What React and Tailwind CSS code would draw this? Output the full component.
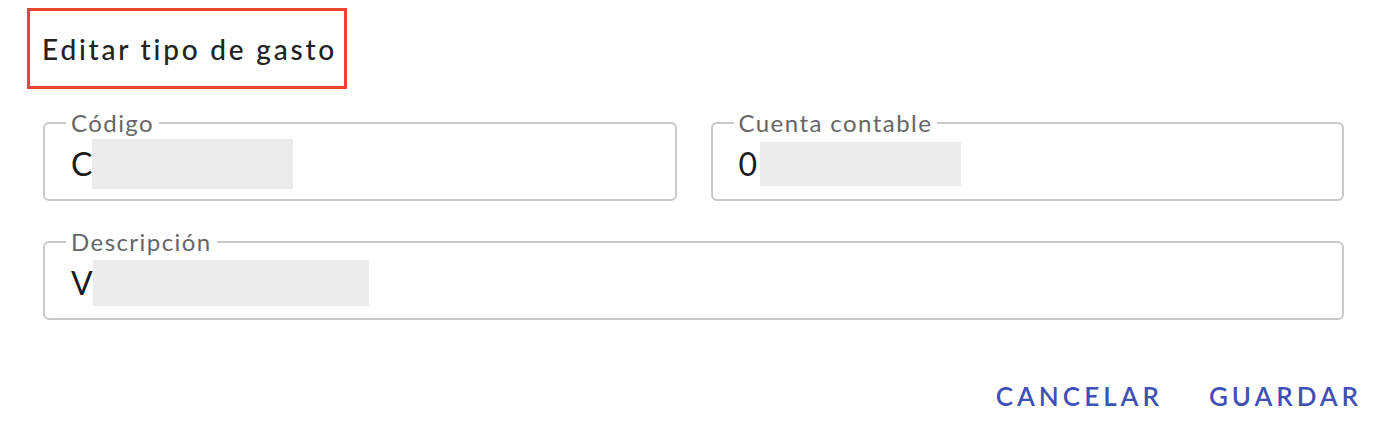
export default function App() {
  const font = { fontFamily: 'Lato, "Noto Sans", sans-serif' };
  return (
    <div className="w-full h-[442px] bg-white" style={font}>
      {/* Header */}
      <div className="pl-[27px] pt-[8px]">
        <div className="w-[320px] h-[81px] border-[3px] border-[#e8452a] flex items-center pl-[12px]">
          <h1 className="text-[28px] font-medium text-[#222] tracking-[0.1em] leading-none whitespace-nowrap">Editar tipo de gasto</h1>
        </div>
      </div>

      {/* Fields */}
      <div className="pl-[43px] pr-[42px] mt-[21px] flex flex-col gap-[28px]">
        <div className="grid grid-cols-2 gap-[34px]">
          <fieldset className="border-2 border-[#c8c8c8] rounded-[6px] px-[26px] pb-[10px] m-0 min-w-0">
            <legend className="text-[24px] leading-[26px] tracking-[0.06em] text-[#666] px-[5px] -ml-[5px]">Código</legend>
            <div className="mt-[3px] h-[50px] flex items-center text-[32px] text-[#1c1c1c]">
              <span>C</span>
              <span className="w-[201px] h-[50px] bg-[#ebebeb]" />
            </div>
          </fieldset>
          <fieldset className="border-2 border-[#c8c8c8] rounded-[6px] px-[26px] pb-[10px] m-0 min-w-0">
            <legend className="text-[24px] leading-[26px] tracking-[0.06em] text-[#666] px-[5px] -ml-[5px]">Cuenta contable</legend>
            <div className="mt-[3px] h-[50px] flex items-center text-[32px] text-[#1c1c1c]">
              <span className="pr-[3px]">0</span>
              <span className="w-[201px] h-[44px] bg-[#ebebeb]" />
            </div>
          </fieldset>
        </div>
        <fieldset className="border-2 border-[#c8c8c8] rounded-[6px] px-[26px] pb-[10px] m-0 min-w-0">
          <legend className="text-[24px] leading-[26px] tracking-[0.06em] text-[#666] px-[5px] -ml-[5px]">Descripción</legend>
          <div className="mt-[3px] h-[50px] flex items-center text-[32px] text-[#1c1c1c]">
            <span>V</span>
            <span className="w-[276px] h-[46px] bg-[#ebebeb]" />
          </div>
        </fieldset>
      </div>

      {/* Actions */}
      <div className="flex justify-end gap-[22px] pr-[12px] mt-[52px]">
        <button className="h-[48px] px-[12px] text-[26px] font-semibold tracking-[0.155em] text-[#3f51b5]">CANCELAR</button>
        <button className="h-[48px] px-[12px] text-[26px] font-semibold tracking-[0.15em] text-[#3f51b5]">GUARDAR</button>
      </div>
    </div>
  );
}
